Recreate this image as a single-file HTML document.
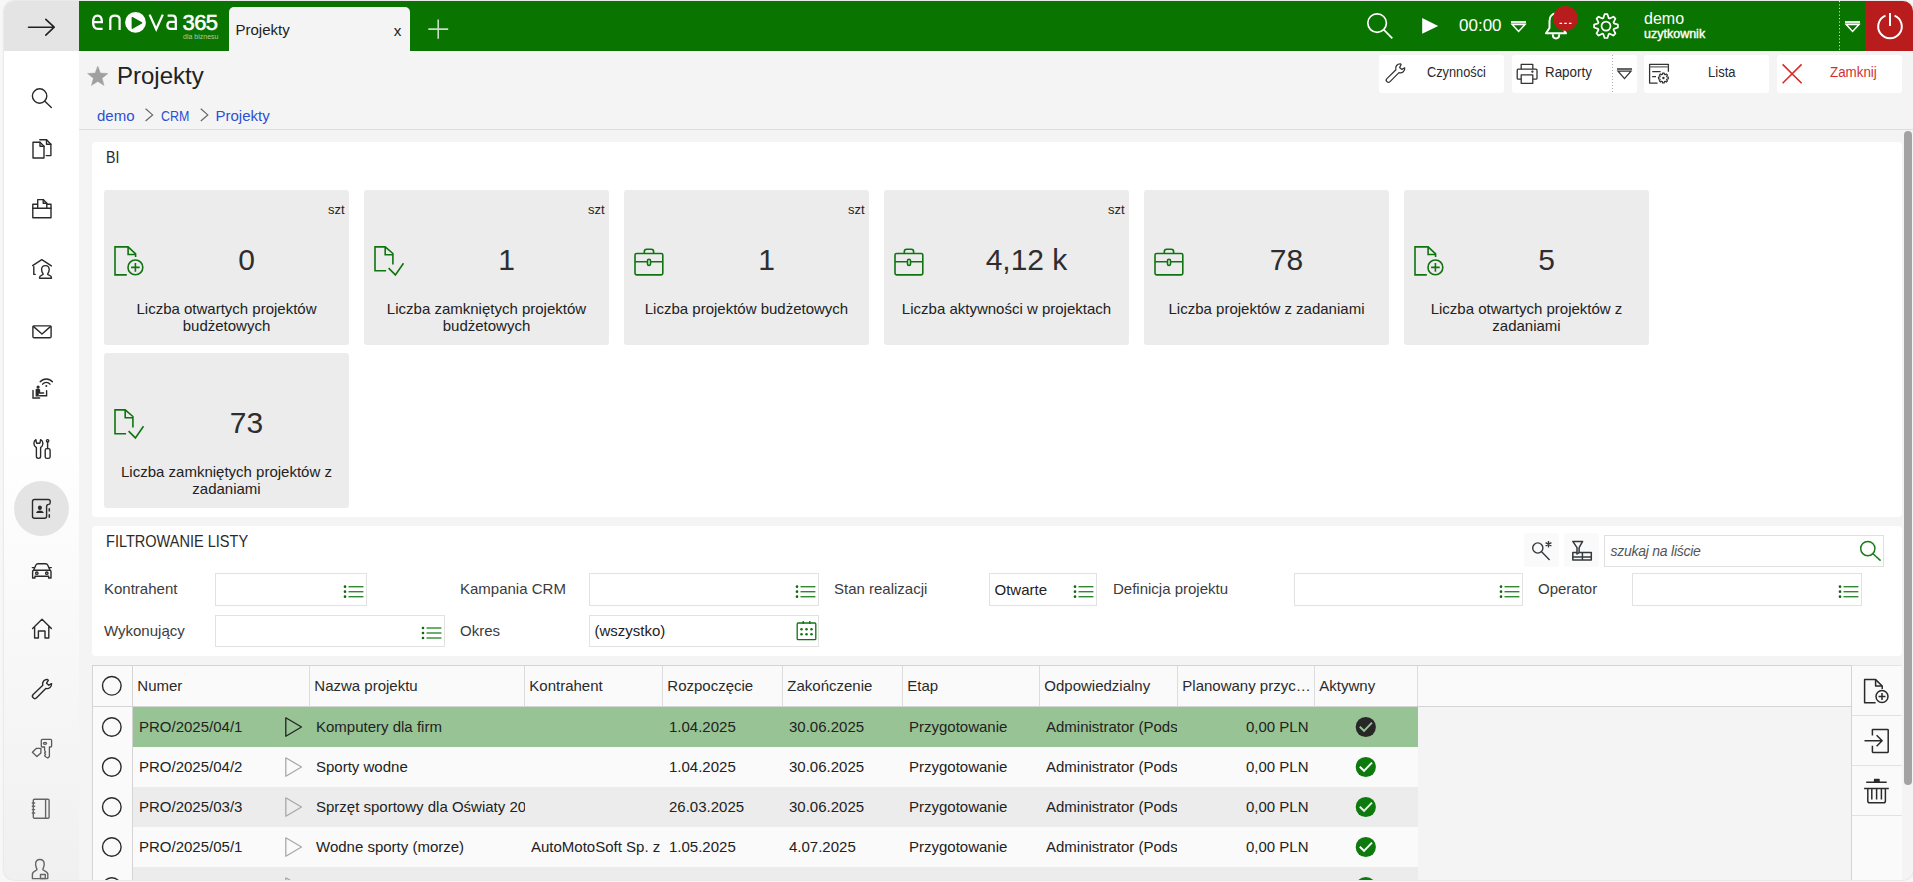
<!DOCTYPE html>
<html><head><meta charset="utf-8">
<style>
*{box-sizing:border-box;margin:0;padding:0}
html,body{width:1913px;height:882px;overflow:hidden;background:#f7f7f7;font-family:"Liberation Sans",sans-serif;color:#333}
#shadow{position:absolute;left:4px;top:1px;width:1909px;height:879px;border-radius:10px;box-shadow:0 0 2px rgba(0,0,0,.2);background:#f4f4f4}
#app{position:absolute;left:0;top:0;width:1913px;height:882px;clip-path:inset(1px 0 2px 4px round 10px)}
.a{position:absolute}
svg{position:absolute;overflow:visible;left:0;top:0}
.t{position:absolute;white-space:nowrap;line-height:1}
#side{left:4px;top:1px;width:75px;height:879px;background:linear-gradient(#fff 0%,#fff 50%,#f0f0f0 100%)}
#sidehead{left:4px;top:1px;width:75px;height:50px;background:#e4e4e4}
#hdr{left:79px;top:1px;width:1786px;height:50px;background:#0a7400}
#pwr{left:1865px;top:1px;width:48px;height:50px;background:#b81c1d}
#main{left:79px;top:51px;width:1834px;height:831px;background:#f4f4f4}
#tab{left:229px;top:7px;width:181px;height:44px;background:#f4f4f4;border-radius:5px 5px 0 0}
.btn{position:absolute;top:55px;height:38px;width:125px;background:#fff;border-radius:3px}
.bt{position:absolute;top:65px;font-size:14px;line-height:1;white-space:nowrap;color:#2a2a2a}
.crumb{position:absolute;top:108px;font-size:15px;line-height:1;color:#2c4fd3;white-space:nowrap}
</style></head><body>
<div id="shadow"></div>
<div id="app">
  <div id="side" class="a"></div>
  <div id="sidehead" class="a"></div>
  <div class="a" style="left:14px;top:481px;width:55px;height:55px;border-radius:50%;background:#e4e4e4"></div>
  <div id="hdr" class="a"></div>
  <div id="pwr" class="a"></div>
  <div id="main" class="a"></div>
  <div id="tab" class="a"></div>
  <div class="t" style="left:235.5px;top:22px;font-size:15px;color:#222">Projekty</div>
  <div class="t" style="left:393.8px;top:22.8px;font-size:15.2px;color:#222">x</div>
  <div class="t" style="left:182.5px;top:11.5px;font-size:22px;color:#fff;letter-spacing:-0.6px;-webkit-text-stroke:0.55px #fff">365</div>
  <div class="t" style="left:183px;top:33px;font-size:7px;color:#a9cba6">dla biznesu</div>
  <div class="t" style="left:1459px;top:17px;font-size:17px;color:#fff">00:00</div>
  <div class="t" style="left:1644px;top:11px;font-size:16px;color:#fff">demo</div>
  <div class="t" style="left:1644px;top:27.5px;font-size:12.5px;color:#fff;-webkit-text-stroke:0.4px #fff">uzytkownik</div>

  <!-- title -->
  <div class="t" style="left:117px;top:64px;font-size:24px;color:#222">Projekty</div>
  <div class="crumb" style="left:97px">demo</div>
  <div class="crumb" style="left:160.8px;transform:scaleX(0.83);transform-origin:0 0">CRM</div>
  <div class="crumb" style="left:215.5px">Projekty</div>
  <div class="a" style="left:79px;top:129px;width:1834px;height:1px;background:#dedede"></div>

  <!-- buttons -->
  <div class="btn" style="left:1379px"></div>
  <div class="btn" style="left:1512px"></div>
  <div class="btn" style="left:1644px"></div>
  <div class="btn" style="left:1777px"></div>
  <div class="bt" style="left:1427px;transform:scaleX(0.913);transform-origin:0 0">Czynności</div>
  <div class="bt" style="left:1544.5px;transform:scaleX(0.955);transform-origin:0 0">Raporty</div>
  <div class="bt" style="left:1708px;transform:scaleX(0.93);transform-origin:0 0">Lista</div>
  <div class="bt" style="left:1830px;transform:scaleX(0.955);transform-origin:0 0;color:#d32f2f">Zamknij</div>

<div class="a" style="left:92px;top:142px;width:1810px;height:375px;background:#fff;border-radius:4px"></div>
<div class="t" style="left:106.2px;top:148.6px;font-size:16.5px;color:#2a2a2a;transform:scaleX(0.86);transform-origin:0 0">BI</div>
<div class="a" style="left:104px;top:190px;width:245px;height:155px;background:#ececec;border-radius:3px"></div>
<div class="t" style="left:254px;width:90.5px;text-align:right;top:203.3px;font-size:13px;color:#222">szt</div>
<div class="t" style="left:144px;width:205px;text-align:center;top:244.5px;font-size:30px;color:#2e2e2e">0</div>
<div class="a" style="left:104px;width:245px;text-align:center;top:300px;font-size:15px;line-height:17px;color:#222">Liczba otwartych projektów<br>budżetowych</div>
<div class="a" style="left:364px;top:190px;width:245px;height:155px;background:#ececec;border-radius:3px"></div>
<div class="t" style="left:514px;width:90.5px;text-align:right;top:203.3px;font-size:13px;color:#222">szt</div>
<div class="t" style="left:404px;width:205px;text-align:center;top:244.5px;font-size:30px;color:#2e2e2e">1</div>
<div class="a" style="left:364px;width:245px;text-align:center;top:300px;font-size:15px;line-height:17px;color:#222">Liczba zamkniętych projektów<br>budżetowych</div>
<div class="a" style="left:624px;top:190px;width:245px;height:155px;background:#ececec;border-radius:3px"></div>
<div class="t" style="left:774px;width:90.5px;text-align:right;top:203.3px;font-size:13px;color:#222">szt</div>
<div class="t" style="left:664px;width:205px;text-align:center;top:244.5px;font-size:30px;color:#2e2e2e">1</div>
<div class="a" style="left:624px;width:245px;text-align:center;top:300px;font-size:15px;line-height:17px;color:#222">Liczba projektów budżetowych</div>
<div class="a" style="left:884px;top:190px;width:245px;height:155px;background:#ececec;border-radius:3px"></div>
<div class="t" style="left:1034px;width:90.5px;text-align:right;top:203.3px;font-size:13px;color:#222">szt</div>
<div class="t" style="left:924px;width:205px;text-align:center;top:244.5px;font-size:30px;color:#2e2e2e">4,12 k</div>
<div class="a" style="left:884px;width:245px;text-align:center;top:300px;font-size:15px;line-height:17px;color:#222">Liczba aktywności w projektach</div>
<div class="a" style="left:1144px;top:190px;width:245px;height:155px;background:#ececec;border-radius:3px"></div>
<div class="t" style="left:1184px;width:205px;text-align:center;top:244.5px;font-size:30px;color:#2e2e2e">78</div>
<div class="a" style="left:1144px;width:245px;text-align:center;top:300px;font-size:15px;line-height:17px;color:#222">Liczba projektów z zadaniami</div>
<div class="a" style="left:1404px;top:190px;width:245px;height:155px;background:#ececec;border-radius:3px"></div>
<div class="t" style="left:1444px;width:205px;text-align:center;top:244.5px;font-size:30px;color:#2e2e2e">5</div>
<div class="a" style="left:1404px;width:245px;text-align:center;top:300px;font-size:15px;line-height:17px;color:#222">Liczba otwartych projektów z<br>zadaniami</div>
<div class="a" style="left:104px;top:353px;width:245px;height:155px;background:#ececec;border-radius:3px"></div>
<div class="t" style="left:144px;width:205px;text-align:center;top:407.5px;font-size:30px;color:#2e2e2e">73</div>
<div class="a" style="left:104px;width:245px;text-align:center;top:463px;font-size:15px;line-height:17px;color:#222">Liczba zamkniętych projektów z<br>zadaniami</div>
<div class="a" style="left:92px;top:526px;width:1810px;height:130px;background:#fff;border-radius:4px"></div>
<div class="t" style="left:106px;top:532.5px;font-size:17px;color:#2a2a2a;transform:scaleX(0.855);transform-origin:0 0">FILTROWANIE LISTY</div>
<div class="t" style="left:104px;top:581.3px;font-size:15px;color:#3c3c3c">Kontrahent</div>
<div class="a" style="left:215px;top:573px;width:152px;height:33px;background:#fff;border:1px solid #e2e2e2"></div>
<div class="t" style="left:460px;top:581.3px;font-size:15px;color:#3c3c3c">Kampania CRM</div>
<div class="a" style="left:589px;top:573px;width:230px;height:33px;background:#fff;border:1px solid #e2e2e2"></div>
<div class="t" style="left:834px;top:581.3px;font-size:15px;color:#3c3c3c">Stan realizacji</div>
<div class="a" style="left:989px;top:573px;width:108px;height:33px;background:#fff;border:1px solid #e2e2e2"></div>
<div class="t" style="left:994.5px;top:581.5px;font-size:15px;color:#222">Otwarte</div>
<div class="t" style="left:1113px;top:581.3px;font-size:15px;color:#3c3c3c">Definicja projektu</div>
<div class="a" style="left:1294px;top:573px;width:229px;height:33px;background:#fff;border:1px solid #e2e2e2"></div>
<div class="t" style="left:1538px;top:581.3px;font-size:15px;color:#3c3c3c">Operator</div>
<div class="a" style="left:1632px;top:573px;width:230px;height:33px;background:#fff;border:1px solid #e2e2e2"></div>
<div class="t" style="left:104px;top:623.1px;font-size:15px;color:#3c3c3c">Wykonujący</div>
<div class="a" style="left:215px;top:615px;width:230px;height:32px;background:#fff;border:1px solid #e2e2e2"></div>
<div class="t" style="left:460px;top:623.1px;font-size:15px;color:#3c3c3c">Okres</div>
<div class="a" style="left:589px;top:615px;width:230px;height:32px;background:#fff;border:1px solid #e2e2e2"></div>
<div class="t" style="left:594.5px;top:623px;font-size:15px;color:#222">(wszystko)</div>
<div class="a" style="left:1524px;top:533px;width:35px;height:34px;background:#fafafa;border-radius:3px"></div>
<div class="a" style="left:1564px;top:533px;width:35px;height:34px;background:#fafafa;border-radius:3px"></div>
<div class="a" style="left:1604px;top:535px;width:280px;height:32px;background:#fff;border:1px solid #e0e0e0"></div>
<div class="t" style="left:1610.5px;top:544px;font-size:14px;font-style:italic;color:#555;letter-spacing:-0.25px">szukaj na liście</div>
<div class="a" style="left:92px;top:665px;width:1760px;height:217px;background:#f4f4f4;border:1px solid #d4d4d4;border-bottom:none;border-right:none"></div>
<div class="a" style="left:93px;top:666px;width:1758px;height:41px;background:#fafafa;border-bottom:1px solid #d4d4d4"></div>
<div class="a" style="left:93px;top:707px;width:39px;height:175px;background:#fafafa"></div>
<div class="a" style="left:132px;top:666px;width:1px;height:216px;background:#d4d4d4"></div>
<div class="a" style="left:309px;top:666px;width:1px;height:40px;background:#dcdcdc"></div>
<div class="a" style="left:524px;top:666px;width:1px;height:40px;background:#dcdcdc"></div>
<div class="a" style="left:662px;top:666px;width:1px;height:40px;background:#dcdcdc"></div>
<div class="a" style="left:782px;top:666px;width:1px;height:40px;background:#dcdcdc"></div>
<div class="a" style="left:902px;top:666px;width:1px;height:40px;background:#dcdcdc"></div>
<div class="a" style="left:1039px;top:666px;width:1px;height:40px;background:#dcdcdc"></div>
<div class="a" style="left:1177px;top:666px;width:1px;height:40px;background:#dcdcdc"></div>
<div class="a" style="left:1314px;top:666px;width:1px;height:40px;background:#dcdcdc"></div>
<div class="a" style="left:1417px;top:666px;width:1px;height:40px;background:#dcdcdc"></div>
<div class="t" style="left:137.3px;top:677.6px;font-size:15px;color:#2a2a2a">Numer</div>
<div class="t" style="left:314.3px;top:677.6px;font-size:15px;color:#2a2a2a">Nazwa projektu</div>
<div class="t" style="left:529.3px;top:677.6px;font-size:15px;color:#2a2a2a">Kontrahent</div>
<div class="t" style="left:667.3px;top:677.6px;font-size:15px;color:#2a2a2a">Rozpoczęcie</div>
<div class="t" style="left:787.3px;top:677.6px;font-size:15px;color:#2a2a2a">Zakończenie</div>
<div class="t" style="left:907.3px;top:677.6px;font-size:15px;color:#2a2a2a">Etap</div>
<div class="t" style="left:1044.3px;top:677.6px;font-size:15px;color:#2a2a2a">Odpowiedzialny</div>
<div class="t" style="left:1182.3px;top:677.6px;font-size:15px;color:#2a2a2a">Planowany przyc…</div>
<div class="t" style="left:1319.3px;top:677.6px;font-size:15px;color:#2a2a2a">Aktywny</div>
<div class="a" style="left:133px;top:707px;width:1285px;height:40px;background:#98c394"></div>
<div class="t" style="left:139px;top:718.8px;font-size:15px;color:#222">PRO/2025/04/1</div>
<div class="a" style="left:316px;top:718.8px;width:209px;overflow:hidden;white-space:nowrap;font-size:15px;line-height:15px;height:18px;color:#222">Komputery dla firm</div>
<div class="t" style="left:669px;top:718.8px;font-size:15px;color:#222">1.04.2025</div>
<div class="t" style="left:789px;top:718.8px;font-size:15px;color:#222">30.06.2025</div>
<div class="t" style="left:909px;top:718.8px;font-size:15px;color:#222">Przygotowanie</div>
<div class="a" style="left:1046px;top:718.8px;width:131px;overflow:hidden;white-space:nowrap;font-size:15px;line-height:15px;height:18px;color:#222">Administrator (Podstawowy)</div>
<div class="t" style="left:1208.5px;width:100px;text-align:right;top:718.8px;font-size:15px;color:#222">0,00 PLN</div>
<div class="a" style="left:133px;top:747px;width:1285px;height:40px;background:#fafafa"></div>
<div class="t" style="left:139px;top:758.8px;font-size:15px;color:#222">PRO/2025/04/2</div>
<div class="a" style="left:316px;top:758.8px;width:209px;overflow:hidden;white-space:nowrap;font-size:15px;line-height:15px;height:18px;color:#222">Sporty wodne</div>
<div class="t" style="left:669px;top:758.8px;font-size:15px;color:#222">1.04.2025</div>
<div class="t" style="left:789px;top:758.8px;font-size:15px;color:#222">30.06.2025</div>
<div class="t" style="left:909px;top:758.8px;font-size:15px;color:#222">Przygotowanie</div>
<div class="a" style="left:1046px;top:758.8px;width:131px;overflow:hidden;white-space:nowrap;font-size:15px;line-height:15px;height:18px;color:#222">Administrator (Podstawowy)</div>
<div class="t" style="left:1208.5px;width:100px;text-align:right;top:758.8px;font-size:15px;color:#222">0,00 PLN</div>
<div class="a" style="left:133px;top:787px;width:1285px;height:40px;background:#ececec"></div>
<div class="t" style="left:139px;top:798.8px;font-size:15px;color:#222">PRO/2025/03/3</div>
<div class="a" style="left:316px;top:798.8px;width:209px;overflow:hidden;white-space:nowrap;font-size:15px;line-height:15px;height:18px;color:#222">Sprzęt sportowy dla Oświaty 2025</div>
<div class="t" style="left:669px;top:798.8px;font-size:15px;color:#222">26.03.2025</div>
<div class="t" style="left:789px;top:798.8px;font-size:15px;color:#222">30.06.2025</div>
<div class="t" style="left:909px;top:798.8px;font-size:15px;color:#222">Przygotowanie</div>
<div class="a" style="left:1046px;top:798.8px;width:131px;overflow:hidden;white-space:nowrap;font-size:15px;line-height:15px;height:18px;color:#222">Administrator (Podstawowy)</div>
<div class="t" style="left:1208.5px;width:100px;text-align:right;top:798.8px;font-size:15px;color:#222">0,00 PLN</div>
<div class="a" style="left:133px;top:827px;width:1285px;height:40px;background:#fafafa"></div>
<div class="t" style="left:139px;top:838.8px;font-size:15px;color:#222">PRO/2025/05/1</div>
<div class="a" style="left:316px;top:838.8px;width:209px;overflow:hidden;white-space:nowrap;font-size:15px;line-height:15px;height:18px;color:#222">Wodne sporty (morze)</div>
<div class="a" style="left:531px;top:838.8px;width:130px;overflow:hidden;white-space:nowrap;font-size:15px;line-height:15px;height:18px;color:#222">AutoMotoSoft Sp. z o.o.</div>
<div class="t" style="left:669px;top:838.8px;font-size:15px;color:#222">1.05.2025</div>
<div class="t" style="left:789px;top:838.8px;font-size:15px;color:#222">4.07.2025</div>
<div class="t" style="left:909px;top:838.8px;font-size:15px;color:#222">Przygotowanie</div>
<div class="a" style="left:1046px;top:838.8px;width:131px;overflow:hidden;white-space:nowrap;font-size:15px;line-height:15px;height:18px;color:#222">Administrator (Podstawowy)</div>
<div class="t" style="left:1208.5px;width:100px;text-align:right;top:838.8px;font-size:15px;color:#222">0,00 PLN</div>
<div class="a" style="left:133px;top:867px;width:1285px;height:40px;background:#ececec"></div>
<div class="a" style="left:1851px;top:665px;width:51px;height:217px;background:#fafafa;border-left:1px solid #d4d4d4;border-top:1px solid #e4e4e4"></div>
<div class="a" style="left:1852px;top:715px;width:50px;height:1px;background:#e2e2e2"></div>
<div class="a" style="left:1852px;top:765px;width:50px;height:1px;background:#e2e2e2"></div>
<div class="a" style="left:1852px;top:815px;width:50px;height:1px;background:#e2e2e2"></div>
<div class="a" style="left:1904px;top:131px;width:8px;height:654px;background:#a3a3a3;border-radius:4px"></div>
  <svg width="1913" height="882" viewBox="0 0 1913 882">
    <!-- sidebar arrow -->
    <g fill="none" stroke="#222" stroke-width="1.6" stroke-linecap="round" stroke-linejoin="round">
      <path d="M28.5,27.2 H54.2 M45.8,19.3 L54.2,27.2 L45.8,35.2"/>
    </g>
    <!-- logo -->
    <g fill="none" stroke="#fff" stroke-width="2.25">
      <path d="M93.1,22.2 H101.9 C101.9,17.5 100.2,15.6 97.5,15.6 C94.6,15.6 93.1,17.8 93.1,22.2 C93.1,26.8 94.8,28.8 98,28.8 H102.6"/>
      <path d="M110.3,29.9 V19.5 C110.3,16.7 112,15.6 115,15.6 C118,15.6 119.6,16.7 119.6,19.5 V29.9"/>
      <path d="M149.6,14.6 L156.2,29.2 L162.8,14.6"/>
      <path d="M167.6,15.6 H172.6 C174.8,15.6 175.8,16.8 175.8,19.4 V29.9 M175.8,21.9 H170.6 C168.3,21.9 167.4,23.2 167.4,25.5 C167.4,27.9 168.5,28.8 170.6,28.8 H175.8"/>
    </g>
    <circle cx="135.5" cy="22.4" r="10.4" fill="#fff"/>
    <path d="M132.3,17.6 L141.6,22.8 L132.3,28.2 Z" fill="#0a7400" stroke="#0a7400" stroke-width="1.4" stroke-linejoin="round"/>
    <!-- plus -->
    <path d="M438.2,19.5 V38.7 M428.3,29.1 H448.2" stroke="#c5dec3" stroke-width="1.6" fill="none"/>
    <!-- search -->
    <g fill="none" stroke="#fff" stroke-width="1.7">
      <circle cx="1377.1" cy="23.1" r="9.3"/>
      <path d="M1383.7,29.7 L1392.3,38.3"/>
    </g>
    <!-- play -->
    <path d="M1422.2,18 L1438.2,25.9 L1422.2,33.8 Z" fill="#fff"/>
    <!-- dropdowns -->
    <g fill="none" stroke="#fff">
      <path d="M1511,22.3 H1526" stroke-width="2.4" stroke="#e0ece0"/>
      <path d="M1512.2,24.4 H1525 L1518.6,31.4 Z" stroke-width="1.5" stroke-linejoin="miter"/>
      <path d="M1845,22.3 H1860" stroke-width="2.4" stroke="#e0ece0"/>
      <path d="M1846.2,24.4 H1859 L1852.6,31.4 Z" stroke-width="1.5"/>
    </g>
    <!-- bell -->
    <g fill="none" stroke="#fff" stroke-width="2" stroke-linejoin="round">
      <path d="M1549.5,28 V21 C1549.5,16 1552.5,13.5 1556,13.5 C1559.5,13.5 1562.5,16 1562.5,21 V28 L1566,33.3 H1546 Z"/>
      <path d="M1552.8,34.2 C1552.8,37.6 1554.3,38.4 1556,38.4 C1557.7,38.4 1559.2,37.6 1559.2,34.2"/>
    </g>
    <circle cx="1565.5" cy="18.4" r="12.4" fill="#b81c1d"/>
    <path d="M1559.5,23.4 h2.6 M1564.2,23.4 h2.6 M1568.9,23.4 h2.6" stroke="#fff" stroke-width="1.2"/>
    <!-- gear -->
    <g transform="translate(1606,26.1)" fill="none" stroke="#fff" stroke-width="1.7" stroke-linejoin="round">
      <path d="M-2.72,-7.95 L-1.44,-11.91 L1.44,-11.91 L2.72,-7.95 L3.69,-7.54 L7.41,-9.44 L9.44,-7.41 L7.54,-3.69 L7.95,-2.72 L11.91,-1.44 L11.91,1.44 L7.95,2.72 L7.54,3.69 L9.44,7.41 L7.41,9.44 L3.69,7.54 L2.72,7.95 L1.44,11.91 L-1.44,11.91 L-2.72,7.95 L-3.69,7.54 L-7.41,9.44 L-9.44,7.41 L-7.54,3.69 L-7.95,2.72 L-11.91,1.44 L-11.91,-1.44 L-7.95,-2.72 L-7.54,-3.69 L-9.44,-7.41 L-7.41,-9.44 L-3.69,-7.54Z"/>
      <circle r="4.5"/>
    </g>
    <!-- dotted separator -->
    <path d="M1839.5,1 V51" stroke="#d7e6d6" stroke-width="1" stroke-dasharray="1.2,2.2"/>
    <!-- power -->
    <g fill="none" stroke="#fff" stroke-width="2" stroke-linecap="butt">
      <path d="M1885.47,15.6 A11.8,11.8 0 1 0 1894.53,15.6"/>
      <path d="M1890,13 V26"/>
    </g>

    <!-- SIDEBAR ICONS -->
    <g fill="none" stroke="#2a2a2a" stroke-width="1.4" stroke-linejoin="round" stroke-linecap="round">
      <!-- search -->
      <circle cx="39.6" cy="96" r="7.2"/>
      <path d="M44.9,101.3 L51.3,107.6"/>
      <!-- docs -->
      <path d="M39.8,139.8 H46.5 L50.9,144.2 V155.6 H46.2"/>
      <path d="M46.5,139.8 V144.2 H50.9"/>
      <path d="M33,142.3 H40 L44,146.3 V158 H33 Z"/>
      <path d="M40,142.3 V146.3 H44"/>
      <!-- box with doc -->
      <path d="M32.8,208.3 H51 V217.7 H32.8 Z"/>
      <path d="M32.8,208.3 V204.3 H37.5 M46.8,204.3 H51 V208.3"/>
      <path d="M37.7,208.3 V199.6 H43.2 L46.8,203.2 V208.3"/>
      <path d="M43.2,199.6 V203.2 H46.8"/>
      <!-- house person -->
      <path d="M32.6,265.6 L41.8,259.6 L51.4,265.9"/>
      <path d="M33.8,266.6 V274.4 H35.2"/>
      <path d="M45.4,265.6 C48,265.6 49.2,267.6 49.2,269.6 C49.2,272.2 47.6,273.6 47.6,274.2 C47.6,275.2 51.4,275.2 51.4,277.2 V278.2 H39.6 V277.2 C39.6,275.2 43.2,275.2 43.2,274.2 C43.2,273.6 41.6,272.2 41.6,269.6 C41.6,267.6 42.8,265.6 45.4,265.6 Z"/>
      <!-- mail -->
      <rect x="32.9" y="325.9" width="18.2" height="11.8" rx="1.2"/>
      <path d="M33.3,326.4 L42,334 L50.7,326.4"/>
      <!-- tools -->
      <path d="M35.9,439.7 L36.6,443.2 H39.9 L40.6,439.7 C42.2,440.5 42.9,442 42.9,443.6 C42.9,445.4 41.8,446.8 40.6,447.6 V456.6 C40.6,457.8 39.7,458.4 38.5,458.4 C37.3,458.4 36.4,457.8 36.4,456.6 V447.6 C35.1,446.8 33.9,445.4 33.9,443.6 C33.9,442 34.6,440.5 35.9,439.7 Z"/>
      <circle cx="47.6" cy="440.8" r="1.2"/>
      <path d="M47.6,442 V448.6"/>
      <rect x="45.2" y="448.6" width="4.9" height="9.8" rx="1.7"/>
      <!-- contact book -->
      <path d="M34.5,499.5 H48.2 C49.4,499.5 50.2,500.3 50.2,501.5 V502.5 C50.2,503.5 49.6,504.4 48.6,504.4 C47.4,504.4 46.6,505.2 46.6,506.6 V516.2 C46.6,517.4 45.8,518.2 44.6,518.2 H34.5 C33.3,518.2 32.5,517.4 32.5,516.2 V501.5 C32.5,500.3 33.3,499.5 34.5,499.5 Z"/>
      <path d="M49.3,508.2 V511.6 M49.3,514.2 V517.8" stroke-width="1.5" stroke-linecap="butt"/>
      <!-- car -->
      <path d="M33.6,570.2 L35.8,565.2 C36.2,564.3 37,563.8 38,563.8 H45.6 C46.6,563.8 47.4,564.3 47.8,565.2 L50,570.2"/>
      <path d="M32.6,571.5 C32.6,570.6 33.4,570.2 34.2,570.2 H49.4 C50.2,570.2 51,570.6 51,571.5 V578 H48.6 V576.3 H35 V578 H32.6 Z"/>
      <circle cx="36.8" cy="573.2" r="1.2"/>
      <circle cx="46.8" cy="573.2" r="1.2"/>
      <path d="M32.3,567.6 H34.3 M49.3,567.6 H51.3"/>
      <!-- home -->
      <path d="M32.6,628.5 L42,619.3 L51.4,628.5 M34.6,626.5 V638 H38.4 V631 H45 V638 H48.8 V626.5"/>
      <!-- wrench -->
      <path d="M47.5,679.5 C44.4,679.2 41.8,682 42.8,685.2 L33.2,694.4 C32.2,695.4 32.2,696.8 33.2,697.8 C34.2,698.8 35.6,698.8 36.6,697.8 L45.8,688.4 C49,689.4 51.8,686.8 51.6,683.6 L48.8,685.2 L46.6,683.2 L48.4,680.2 Z"/>
      <!-- key tag -->
    </g>
    <g fill="none" stroke="#5a5a5a" stroke-width="1.3" stroke-linejoin="round" stroke-linecap="round">
      <path d="M44.6,747 H42.3 C41.6,747 41.3,746.6 41.3,746 V740.3 C41.3,739.6 41.6,739.3 42.3,739.3 H50.6 C51.3,739.3 51.6,739.6 51.6,740.3 V746 C51.6,746.6 51.3,747 50.6,747 H49.4 V756.6 L47.8,758 L45.6,756.8 L44.6,755.6 L45.6,754.4 L44.6,753 L45.6,751.8 L44.6,750.6 Z"/>
      <ellipse cx="45" cy="743.3" rx="1.6" ry="1"/>
      <path d="M32.4,752.2 L36.5,748.3 H40.9 V753 L36.9,756.6 Z"/>
    </g>
    <g fill="none" stroke="#666" stroke-width="1.4" stroke-linejoin="round" stroke-linecap="round">
      <!-- notebook -->
      <rect x="33.3" y="799.3" width="15.8" height="19" rx="1"/>
      <path d="M45.6,799.5 V818.2"/>
      <path d="M32.3,803 H34.6 M32.3,806.3 H34.6 M32.3,809.6 H34.6 M32.3,813 H34.6"/>
      <!-- person -->
      <path d="M39.9,859.5 C42.8,859.5 44.2,861.7 44.2,864.3 C44.2,867 42.8,868.8 42.8,869.6 C42.8,870.6 47.8,871 47.8,874.2 V878.6 H32.4 V874.2 C32.4,871 37,870.6 37,869.6 C37,868.8 35.6,867 35.6,864.3 C35.6,861.7 37,859.5 39.9,859.5 Z"/>
      <rect x="40.5" y="874.5" width="4.8" height="4"/>
    </g>
    <!-- contact book person (filled) -->
    <g fill="#2a2a2a">
      <ellipse cx="39.9" cy="507.7" rx="2" ry="2.3"/>
      <path d="M36,512.9 C36.8,511.2 38.3,510.5 39.9,510.5 C41.5,510.5 43,511.2 43.8,512.9 Z"/>
    </g>
    <!-- person wifi -->
    <g fill="none" stroke="#2a2a2a" stroke-width="1.4" stroke-linecap="round">
      <path d="M42.6,384.2 A4.6,4.6 0 0 1 50,384.2"/>
      <path d="M40.2,381.8 A8,8 0 0 1 52.4,381.8"/>
      <path d="M33,390.5 V398 H39.6"/>
      <path d="M39.6,395.7 H46.6 V390.6"/>
      <path d="M40,393 H43.6"/>
    </g>
    <g fill="#2a2a2a">
      <circle cx="46.3" cy="385.9" r="1"/>
      <circle cx="38.1" cy="387.1" r="1.6"/>
      <path d="M35.6,389.6 C35.6,389 36.4,388.8 38,388.8 C39.6,388.8 40.2,389.4 40.2,390.4 V393.6 H38.8 V396.6 H35.6 Z"/>
    </g>

    <!-- BUTTON ICONS -->
    <g fill="none" stroke="#333" stroke-width="1.3" stroke-linejoin="round">
      <!-- wrench -->
      <path transform="translate(1400.6,68.6) scale(0.9) translate(-1400,-69.5)" d="M1400,64.3 C1396.4,64 1393.6,67.1 1394.8,70.8 L1384.8,80.6 C1383.8,81.6 1383.8,83 1384.8,84 C1385.8,85 1387.2,85 1388.2,84 L1398.2,74 C1401.9,75.2 1405,72.2 1404.6,68.6 L1401.5,70.4 L1398.9,68.3 L1400.6,65 Z" stroke-width="1.4"/>
      <!-- printer -->
      <path d="M1521.2,69.2 V64.3 H1532.8 V69.2"/>
      <path d="M1521.2,79.2 H1518.2 C1517.5,79.2 1517.2,78.9 1517.2,78.2 V70.2 C1517.2,69.5 1517.5,69.2 1518.2,69.2 H1536 C1536.7,69.2 1537,69.5 1537,70.2 V78.2 C1537,78.9 1536.7,79.2 1536,79.2 H1532.8"/>
      <path d="M1521.2,74.9 H1532.8 V83.3 H1521.2 Z"/>
      <circle cx="1532.4" cy="71.7" r="0.5" fill="#333"/>
      <!-- lista window -->
      <path d="M1657.6,83.1 H1649.6 V64.3 H1668.4 V71.7"/>
      <path d="M1649.6,66.8 H1668.4" stroke="#666"/>
      <path d="M1652.2,71.6 H1660.6 M1652.2,76.7 H1656"/>
      
    </g>
    <path d="M1662.38,74.44 L1662.55,73.07 L1664.25,73.07 L1664.42,74.44 L1665.19,74.76 L1666.29,73.92 L1667.48,75.11 L1666.64,76.21 L1666.96,76.98 L1668.33,77.15 L1668.33,78.85 L1666.96,79.02 L1666.64,79.79 L1667.48,80.89 L1666.29,82.08 L1665.19,81.24 L1664.42,81.56 L1664.25,82.93 L1662.55,82.93 L1662.38,81.56 L1661.61,81.24 L1660.51,82.08 L1659.32,80.89 L1660.16,79.79 L1659.84,79.02 L1658.47,78.85 L1658.47,77.15 L1659.84,76.98 L1660.16,76.21 L1659.32,75.11 L1660.51,73.92 L1661.61,74.76Z" fill="none" stroke="#333" stroke-width="1.15" stroke-linejoin="round"/><circle cx="1663.4" cy="78" r="1.2" fill="#333"/>
    <!-- zamknij X -->
    <path d="M1782.6,64.4 L1801.6,83.2 M1801.6,64.4 L1782.6,83.2" stroke="#d42b2b" stroke-width="1.6" fill="none"/>
    <!-- raporty dropdown -->
    <path d="M1612.5,55 V93" stroke="#aaa" stroke-width="1" stroke-dasharray="1,2"/>
    <path d="M1617,69 H1632" stroke="#333" stroke-width="1.4"/>
    <path d="M1618,71.2 H1631 L1624.5,78.6 Z" stroke="#333" stroke-width="1.3" fill="none"/>
    <!-- title star -->
    <path d="M97.75,66.00 L100.45,73.08 L108.02,73.46 L102.12,78.22 L104.10,85.54 L97.75,81.40 L91.40,85.54 L93.38,78.22 L87.48,73.46 L95.05,73.08Z" fill="#a0a0a0" stroke="#a0a0a0" stroke-width="0.4" stroke-linejoin="round"/>
    <!-- breadcrumb chevrons -->
    <path d="M145.6,108.8 L152.6,114.9 L145.6,121 M200.8,108.8 L207.8,114.9 L200.8,121" fill="none" stroke="#666" stroke-width="1.2"/>
<g transform="translate(104,190)" fill="none" stroke="#0f740f" stroke-width="1.6"><path d="M22.8,84.9 H11 V56.9 H24.1 L31.6,63.8 V66.9"/><path d="M24.1,56.9 V64.5 H31.6"/><circle cx="31.4" cy="77.4" r="7.4"/><path d="M27.1,77.4 H35.7 M31.4,73.1 V81.7"/></g>
<g transform="translate(364,190)" fill="none" stroke="#0f740f" stroke-width="1.6"><path d="M22.1,80.8 H11 V56.9 H21.2 L28.9,63.5 V74.4"/><path d="M21.2,56.9 V64.8 H28.9"/><path d="M24.6,78.1 L31.4,84.9 L39.5,73.3"/></g>
<g transform="translate(624,190)" fill="none" stroke="#0f740f" stroke-width="1.6" stroke-linejoin="round"><rect x="11" y="63.5" width="27.8" height="21.4" rx="1.6"/><path d="M20.3,63.5 V61.6 C20.3,60 21.1,59.3 22.6,59.3 H27.3 C28.8,59.3 29.6,60 29.6,61.6 V63.5"/><path d="M11,71.8 H23.5 M26.5,71.8 H38.8"/><rect x="23.5" y="69.3" width="3" height="6.1" rx="1.5"/></g>
<g transform="translate(884,190)" fill="none" stroke="#0f740f" stroke-width="1.6" stroke-linejoin="round"><rect x="11" y="63.5" width="27.8" height="21.4" rx="1.6"/><path d="M20.3,63.5 V61.6 C20.3,60 21.1,59.3 22.6,59.3 H27.3 C28.8,59.3 29.6,60 29.6,61.6 V63.5"/><path d="M11,71.8 H23.5 M26.5,71.8 H38.8"/><rect x="23.5" y="69.3" width="3" height="6.1" rx="1.5"/></g>
<g transform="translate(1144,190)" fill="none" stroke="#0f740f" stroke-width="1.6" stroke-linejoin="round"><rect x="11" y="63.5" width="27.8" height="21.4" rx="1.6"/><path d="M20.3,63.5 V61.6 C20.3,60 21.1,59.3 22.6,59.3 H27.3 C28.8,59.3 29.6,60 29.6,61.6 V63.5"/><path d="M11,71.8 H23.5 M26.5,71.8 H38.8"/><rect x="23.5" y="69.3" width="3" height="6.1" rx="1.5"/></g>
<g transform="translate(1404,190)" fill="none" stroke="#0f740f" stroke-width="1.6"><path d="M22.8,84.9 H11 V56.9 H24.1 L31.6,63.8 V66.9"/><path d="M24.1,56.9 V64.5 H31.6"/><circle cx="31.4" cy="77.4" r="7.4"/><path d="M27.1,77.4 H35.7 M31.4,73.1 V81.7"/></g>
<g transform="translate(104,353)" fill="none" stroke="#0f740f" stroke-width="1.6"><path d="M22.1,80.8 H11 V56.9 H21.2 L28.9,63.5 V74.4"/><path d="M21.2,56.9 V64.8 H28.9"/><path d="M24.6,78.1 L31.4,84.9 L39.5,73.3"/></g>
<circle cx="345" cy="586.7" r="1.35" fill="#0b6a0b"/>
<path d="M348.5,586.7 H363.4" stroke="#2f8a2f" stroke-width="1.4"/>
<circle cx="345" cy="591.7" r="1.35" fill="#0b6a0b"/>
<path d="M348.5,591.7 H363.4" stroke="#2f8a2f" stroke-width="1.4"/>
<circle cx="345" cy="596.7" r="1.35" fill="#0b6a0b"/>
<path d="M348.5,596.7 H363.4" stroke="#2f8a2f" stroke-width="1.4"/>
<circle cx="797" cy="586.7" r="1.35" fill="#0b6a0b"/>
<path d="M800.5,586.7 H815.4" stroke="#2f8a2f" stroke-width="1.4"/>
<circle cx="797" cy="591.7" r="1.35" fill="#0b6a0b"/>
<path d="M800.5,591.7 H815.4" stroke="#2f8a2f" stroke-width="1.4"/>
<circle cx="797" cy="596.7" r="1.35" fill="#0b6a0b"/>
<path d="M800.5,596.7 H815.4" stroke="#2f8a2f" stroke-width="1.4"/>
<circle cx="1075" cy="586.7" r="1.35" fill="#0b6a0b"/>
<path d="M1078.5,586.7 H1093.4" stroke="#2f8a2f" stroke-width="1.4"/>
<circle cx="1075" cy="591.7" r="1.35" fill="#0b6a0b"/>
<path d="M1078.5,591.7 H1093.4" stroke="#2f8a2f" stroke-width="1.4"/>
<circle cx="1075" cy="596.7" r="1.35" fill="#0b6a0b"/>
<path d="M1078.5,596.7 H1093.4" stroke="#2f8a2f" stroke-width="1.4"/>
<circle cx="1501" cy="586.7" r="1.35" fill="#0b6a0b"/>
<path d="M1504.5,586.7 H1519.4" stroke="#2f8a2f" stroke-width="1.4"/>
<circle cx="1501" cy="591.7" r="1.35" fill="#0b6a0b"/>
<path d="M1504.5,591.7 H1519.4" stroke="#2f8a2f" stroke-width="1.4"/>
<circle cx="1501" cy="596.7" r="1.35" fill="#0b6a0b"/>
<path d="M1504.5,596.7 H1519.4" stroke="#2f8a2f" stroke-width="1.4"/>
<circle cx="1840" cy="586.7" r="1.35" fill="#0b6a0b"/>
<path d="M1843.5,586.7 H1858.4" stroke="#2f8a2f" stroke-width="1.4"/>
<circle cx="1840" cy="591.7" r="1.35" fill="#0b6a0b"/>
<path d="M1843.5,591.7 H1858.4" stroke="#2f8a2f" stroke-width="1.4"/>
<circle cx="1840" cy="596.7" r="1.35" fill="#0b6a0b"/>
<path d="M1843.5,596.7 H1858.4" stroke="#2f8a2f" stroke-width="1.4"/>
<circle cx="423" cy="628" r="1.35" fill="#0b6a0b"/>
<path d="M426.5,628 H441.4" stroke="#2f8a2f" stroke-width="1.4"/>
<circle cx="423" cy="633" r="1.35" fill="#0b6a0b"/>
<path d="M426.5,633 H441.4" stroke="#2f8a2f" stroke-width="1.4"/>
<circle cx="423" cy="638" r="1.35" fill="#0b6a0b"/>
<path d="M426.5,638 H441.4" stroke="#2f8a2f" stroke-width="1.4"/>
<g fill="none" stroke="#0f740f" stroke-width="1.3"><rect x="797.2" y="623" width="18.6" height="16.7" rx="1"/><path d="M803.2,621 V624 M809.8,621 V624"/></g>
<circle cx="801.5" cy="629.2" r="1.25" fill="#0f740f"/>
<circle cx="801.5" cy="634.2" r="1.25" fill="#0f740f"/>
<circle cx="806.5" cy="629.2" r="1.25" fill="#0f740f"/>
<circle cx="806.5" cy="634.2" r="1.25" fill="#0f740f"/>
<circle cx="811.5" cy="629.2" r="1.25" fill="#0f740f"/>
<circle cx="811.5" cy="634.2" r="1.25" fill="#0f740f"/>
<g fill="none" stroke="#333a3d" stroke-width="1.4"><circle cx="1537.8" cy="548" r="5.1"/><path d="M1541.6,551.8 L1549.6,560"/></g>
<g stroke="#333a3d" stroke-width="1.4" fill="none"><path d="M1548.5,541 V547.6 M1545.6,542.6 L1551.4,546 M1551.4,542.6 L1545.6,546"/></g>
<g fill="none" stroke="#333a3d" stroke-width="1.5" stroke-linejoin="round"><path d="M1572.8,541.4 H1582.6 L1579.1,547.6 V552.6 L1577,554 V547.6 Z"/><path d="M1577,552.6 H1572.8 V559.9 H1591.3 V552.6 H1579.1"/><path d="M1572.8,557 H1591.3 M1582.4,552.6 V559.9"/></g>
<g fill="none" stroke="#1a7a1a" stroke-width="1.5"><circle cx="1867.8" cy="548.6" r="7.1"/><path d="M1872.9,553.7 L1880.6,560.6"/></g>
<circle cx="111.8" cy="685.8" r="9.3" fill="none" stroke="#2a2a2a" stroke-width="1.4"/>
<circle cx="111.8" cy="727" r="9.3" fill="none" stroke="#2a2a2a" stroke-width="1.4"/>
<path d="M285.8,717.8 L301.5,727 L285.8,736.2 Z" fill="none" stroke="#222" stroke-width="1.3" stroke-linejoin="round"/>
<circle cx="1365.8" cy="727" r="10.1" fill="#272727"/>
<path d="M1359.8,726.8 L1364,730.8 L1372,722.6" fill="none" stroke="#98c394" stroke-width="1.9"/>
<circle cx="111.8" cy="767" r="9.3" fill="none" stroke="#2a2a2a" stroke-width="1.4"/>
<path d="M285.8,757.8 L301.5,767 L285.8,776.2 Z" fill="none" stroke="#a8a8a8" stroke-width="1.3" stroke-linejoin="round"/>
<circle cx="1365.8" cy="767" r="10.1" fill="#0d7a0d"/>
<path d="M1359.8,766.8 L1364,770.8 L1372,762.6" fill="none" stroke="#fafafa" stroke-width="1.9"/>
<circle cx="111.8" cy="807" r="9.3" fill="none" stroke="#2a2a2a" stroke-width="1.4"/>
<path d="M285.8,797.8 L301.5,807 L285.8,816.2 Z" fill="none" stroke="#a8a8a8" stroke-width="1.3" stroke-linejoin="round"/>
<circle cx="1365.8" cy="807" r="10.1" fill="#0d7a0d"/>
<path d="M1359.8,806.8 L1364,810.8 L1372,802.6" fill="none" stroke="#ececec" stroke-width="1.9"/>
<circle cx="111.8" cy="847" r="9.3" fill="none" stroke="#2a2a2a" stroke-width="1.4"/>
<path d="M285.8,837.8 L301.5,847 L285.8,856.2 Z" fill="none" stroke="#a8a8a8" stroke-width="1.3" stroke-linejoin="round"/>
<circle cx="1365.8" cy="847" r="10.1" fill="#0d7a0d"/>
<path d="M1359.8,846.8 L1364,850.8 L1372,842.6" fill="none" stroke="#fafafa" stroke-width="1.9"/>
<circle cx="111.8" cy="887" r="9.3" fill="none" stroke="#2a2a2a" stroke-width="1.4"/>
<path d="M285.8,877.8 L301.5,887 L285.8,896.2 Z" fill="none" stroke="#a8a8a8" stroke-width="1.3" stroke-linejoin="round"/>
<circle cx="1365.8" cy="887" r="10.1" fill="#0d7a0d"/>
<path d="M1359.8,886.8 L1364,890.8 L1372,882.6" fill="none" stroke="#ececec" stroke-width="1.9"/>
<g fill="none" stroke="#2a2a2a" stroke-width="1.5" stroke-linejoin="round"><path d="M1875.6,702.8 H1864.6 V679.6 H1875.6 L1882.2,686 V689"/><path d="M1875.6,679.6 V686 H1882.2"/><circle cx="1882" cy="696.5" r="6"/><path d="M1878.5,696.5 H1885.5 M1882,693 V700"/></g>
<g fill="none" stroke="#2a2a2a" stroke-width="1.5" stroke-linejoin="round"><path d="M1872.4,735.6 V729.6 C1872.4,729.6 1872.4,729.4 1873,729.4 H1887.6 C1888,729.4 1888.2,729.6 1888.2,730 V751.8 C1888.2,752.2 1888,752.4 1887.6,752.4 H1873 C1872.6,752.4 1872.4,752.2 1872.4,751.8 V745.8"/><path d="M1864.5,740.7 H1882 M1876.6,735.2 L1882.1,740.7 L1876.6,746.2"/></g>
<g fill="none" stroke="#2a2a2a" stroke-width="1.5" stroke-linejoin="round"><path d="M1866.2,782.2 H1886.7"/><path d="M1874.6,782 V779.6 H1879 V782 Z" fill="#2a2a2a"/><path d="M1864.1,788.6 H1888.8"/><path d="M1867.8,788.6 V801 C1867.8,802.2 1868.6,802.8 1869.6,802.8 H1883.6 C1884.6,802.8 1885.4,802.2 1885.4,801 V788.6"/><path d="M1871.8,789 V799.4 M1876.6,789 V799.4 M1881.4,789 V799.4"/></g>
  </svg>
</div>
</body></html>
